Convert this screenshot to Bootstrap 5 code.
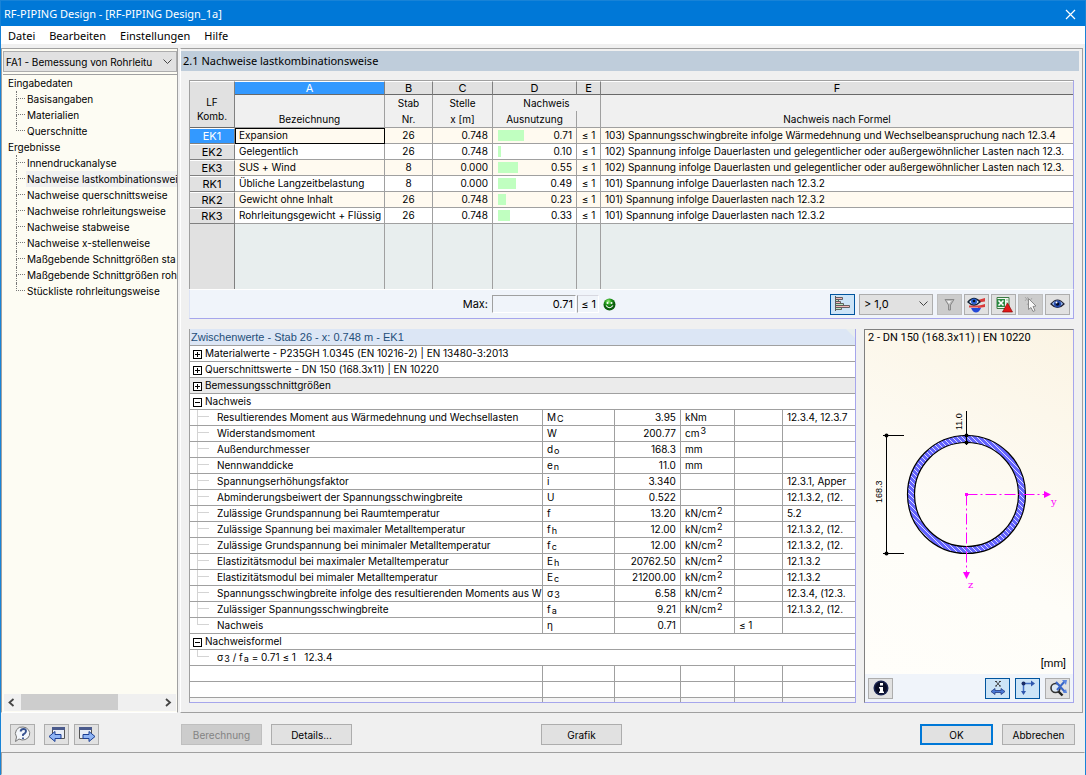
<!DOCTYPE html>
<html lang="de">
<head>
<meta charset="utf-8">
<meta name="viewport" content="width=device-width, initial-scale=1">
<title>RF-PIPING Design</title>
<link href="https://cdn.jsdelivr.net/npm/bootstrap@5.3.0/dist/css/bootstrap.min.css" rel="stylesheet">
<style>
:root{--ui:"Noto Sans",sans-serif;--grid:Inter,"Liberation Sans",sans-serif;--ln:#a0a0a0;--face:#f0f0f0;--edge:#a6a6ec}
body{font-family:var(--grid);font-size:10px;line-height:16px;font-feature-settings:"calt" 0;color:#000;background:var(--face);min-height:100vh;border:1px solid #1883d7}
button,select,input{font:inherit;color:inherit}
.titlebar{background:#0078d7;color:#fff;font-family:var(--ui);font-size:11px;height:25px;padding-left:3px}
.titlebar button{width:30px;height:24px;background:none;border:0;padding:0}
.menubar{background:#fff;font-family:var(--ui);font-size:11px;height:18px;padding-left:7px;gap:14px}
.menubar a{color:#000;text-decoration:none;line-height:19px}
.workarea{margin-top:4px}
.side{width:177px;border:1px solid var(--ln);border-bottom-color:#fff;background:#fdfcf3}
.combo{appearance:none;border:1px solid #adadad;border-radius:0;background:#e1e1e1 url("data:image/svg+xml,%3Csvg xmlns='http://www.w3.org/2000/svg' width='9' height='6'%3E%3Cpath d='M.5 .5l4 4 4-4' fill='none' stroke='%23444'/%3E%3C/svg%3E") no-repeat right 4px center}
.side .combo{height:21px;margin:2px 0 0 1px;padding:0 16px 0 2px;width:calc(100% - 1px)}
.tree{border-top:1px solid var(--ln);margin:2px 0 0 1px;white-space:nowrap;overflow:hidden;background:#fdfcf3}
.tree ul{list-style:none;margin:0;padding:0}
.tree>ul>li{padding-left:5px}
.tree li li{position:relative;margin-left:8px;padding-left:10px}
.tree li li::before{content:"";position:absolute;left:0;top:0;width:9px;height:8px;border-left:1px dotted #777;border-bottom:1px dotted #777}
.tree li li:not(:last-child)::after{content:"";position:absolute;left:0;top:8px;height:8px;border-left:1px dotted #777}
.tree a{display:block;color:#000;text-decoration:none;padding-left:1px}
.tree a.cur{background:#f0f0f0}
.hscroll{height:17px;background:#f0f0f0;margin:0 1px 1px 2px}
.hscroll svg{width:17px;height:17px}
.hscroll span{width:97px;height:16px;background:#cdcdcd}
.mainp{margin-left:2px;margin-right:2px;border:1px solid var(--ln);border-left:1px solid #fff;min-width:0;padding:2px 3px 9px 0}
.mainp h1{font:11px/20px var(--ui);background:#bfcddb;margin:0 0 9px;padding-left:2px;height:20px}
.content{margin:0 5px 0 8px}
table{border-collapse:separate;border-spacing:0;table-layout:fixed;width:100%}
.res{border:1px solid var(--ln);border-right-color:var(--edge);border-bottom:0}
.res td,.res th{padding:0;border:0 solid var(--ln);border-right-width:1px;border-bottom-width:1px;height:16px;line-height:15px;font-weight:400;white-space:nowrap;overflow:hidden;text-align:center}
.res tr>:last-child{border-right-width:0}
.res thead th{background:var(--face);border-bottom-width:0}
.res thead tr:last-child th{border-bottom-width:1px;height:17px;line-height:14px}
.res thead .ltr th{font-size:11px;background:#e1e1e1;border-top:1px solid #fff;border-bottom:1px solid #696969;border-right-color:#808080;height:14px;line-height:12px}
.res thead .ltr th.on{background:#3399ff;color:#fff}
.res thead .ltr th.corner{font-size:10px;background:#e1e1e1;border-bottom:1px solid #696969;line-height:14px;padding-top:8px}
.res tbody th{font-size:11px;background:#e1e1e1;border-top:1px solid #fff;border-right-color:#808080;border-bottom-color:#808080;line-height:12px}
.res tbody th.on{background:#3399ff;color:#fff}
.res tbody td{background:#fff}
.res tbody tr:nth-child(odd) td{background:#fffaf0}
.res .l{text-align:left;padding-left:4px}
.res .r{text-align:right;padding-right:4px}
.res td.pick{outline:1px solid #000;outline-offset:-1px}
.res .rest td,.res .rest:nth-child(odd) td{background:#e8eeee;height:65px;border-bottom:0}
.res .rest th{background:#e1e1e1;border-top:0;border-bottom:0}
.usage{width:40px;height:11px;margin-left:5px}
.usage i{display:block;height:11px;background:#c0ffc0}
.sumbar{background:#f0f4fa;border:1px solid var(--edge);border-top-color:#fff;border-left-color:#dde3f4;height:30px;font-size:11px;padding-right:3px}
.sumbar label{width:302px;text-align:right;padding-right:4px}
.sumbar input,.sumbar output{border:1px solid #fff;border-left-color:var(--ln);border-top-color:var(--ln);background:#f0f4fa;height:18px;border-radius:0;text-align:right;padding:0 2px 0 0}
.sumbar input{width:84px}
.sumbar output{width:22px;line-height:16px;margin-left:1px;border-top-color:#d8d8e0}
.tool{width:25px;height:21px;padding:0;background:#e1e1e1;border:1px solid #adadad;display:flex;align-items:center;justify-content:center}
.tool.on{background:#cce4f7;border:1px solid #00549e}
.tool:disabled{background:#ccc;border-color:#bfbfbf}
.lower{margin-top:10px;gap:8px}
.detail{border-left:1px solid var(--ln);border-right:1px solid var(--edge);border-bottom:1px solid var(--edge);background:#e8eeee;min-width:0}
.detail h2{font:11px/17px "Liberation Sans",sans-serif;color:#1f4e79;background:#dce6f5;margin:0;padding-left:1px;height:17px;border-bottom:1px solid var(--ln);clip-path:polygon(0 0,calc(100% - 9px) 0,100% 9px,100% 100%,0 100%)}
.calc td,.calc th{padding:0;font-weight:400;height:16px;line-height:15px;border-bottom:1px solid var(--ln);border-right:1px solid var(--ln);white-space:nowrap;overflow:hidden;background:#fff;text-align:left;padding-left:4px}
.calc tr>:last-child{border-right:0}
.calc .n{text-align:right;padding-right:4px}
.calc th.leaf{position:relative;padding-left:27px}
.calc th.leaf::before{content:"";position:absolute;left:7px;top:0;width:12px;height:7px;border-left:1px solid #d4d4d4;border-bottom:1px solid #d4d4d4}
.calc th.leaf:not(.end)::after{content:"";position:absolute;left:7px;top:7px;height:9px;border-left:1px solid #d4d4d4}
.calc .grp th{padding-left:3px}
.calc .grp.shade th{background:#ebebeb}
.calc button{width:9px;height:9px;border:1px solid #000;background:#fff;padding:0;margin-right:3px;display:inline-flex;vertical-align:-1px;border-radius:0}
.calc .tail td{height:4px;line-height:2px;border-bottom:0;background:#f4f4f4}
sub,sup{font-size:9px;line-height:0;padding-left:1px;bottom:auto;top:auto;position:static}
sub{vertical-align:-1px}sup{vertical-align:3px}
.section{width:210px;flex:none;border:1px solid var(--edge);border-top-color:#808080;border-left-color:#808080}
.canvas{background:linear-gradient(205deg,#fbf4e4,#fefdf8 65%,#fffefa);color:#000;font-family:Roboto,sans-serif;font-size:11px}
.canvas .cap{padding:0 0 0 3px}
.canvas .unit{text-align:right;padding-right:7px;height:18px}
.sectools{background:#f0f4fa;height:28px;padding:0 3px}
.cmd{border:1px solid #adadad;background:#e1e1e1;border-radius:0;height:21px;width:81px;padding:0;line-height:18px}
.cmd:disabled{background:#ccc;color:#838383;border-color:#bfbfbf}
.cmd.ok{border:2px solid #0078d7;width:73px}
.cmds{height:39px;padding:11px 10px 7px 9px}
.status{height:23px;border:1px solid var(--face);border-top-color:var(--ln);border-left-color:var(--ln)}
</style>
</head>
<body class="d-flex flex-column">
<header class="titlebar d-flex align-items-center justify-content-between">
  <span>RF-PIPING Design - [RF-PIPING Design_1a]</span>
  <button type="button" aria-label="Schließen"><svg width="11" height="11"><path d="M1 1l9 9M10 1l-9 9" stroke="#fff" stroke-width="1.2"/></svg></button>
</header>
<nav class="menubar d-flex"><a href="#">Datei</a><a href="#">Bearbeiten</a><a href="#">Einstellungen</a><a href="#">Hilfe</a></nav>

<div class="workarea d-flex flex-grow-1">
  <aside class="side d-flex flex-column flex-shrink-0">
    <select class="combo" aria-label="Bemessungsfall"><option>FA1 - Bemessung von Rohrleitu</option></select>
    <nav class="tree flex-grow-1">
      <ul>
        <li>Eingabedaten
          <ul><li><a href="#">Basisangaben</a></li><li><a href="#">Materialien</a></li><li><a href="#">Querschnitte</a></li></ul></li>
        <li>Ergebnisse
          <ul><li><a href="#">Innendruckanalyse</a></li><li><a href="#" class="cur">Nachweise lastkombinationswei</a></li><li><a href="#">Nachweise querschnittsweise</a></li><li><a href="#">Nachweise rohrleitungsweise</a></li><li><a href="#">Nachweise stabweise</a></li><li><a href="#">Nachweise x-stellenweise</a></li><li><a href="#">Maßgebende Schnittgrößen sta</a></li><li><a href="#">Maßgebende Schnittgrößen roh</a></li><li><a href="#">Stückliste rohrleitungsweise</a></li></ul></li>
      </ul>
    </nav>
    <div class="hscroll d-flex">
      <svg><path d="M9.500 5l-4 3.500 4 3.500" fill="none" stroke="#444" stroke-width="1.800"/></svg><span></span><svg class="ms-auto"><path d="M7 5l4 3.500-4 3.500" fill="none" stroke="#444" stroke-width="1.800"/></svg>
    </div>
  </aside>

  <main class="mainp flex-grow-1 d-flex flex-column">
    <h1>2.1 Nachweise lastkombinationsweise</h1>
    <div class="content flex-grow-1 d-flex flex-column">
      <table class="res">
        <colgroup><col style="width:45px"><col style="width:150px"><col style="width:48px"><col style="width:60px"><col style="width:84px"><col style="width:24px"><col></colgroup>
        <thead>
          <tr class="ltr"><th rowspan="3" class="corner">LF<br>Komb.</th><th class="on">A</th><th>B</th><th>C</th><th>D</th><th>E</th><th>F</th></tr>
          <tr><th></th><th>Stab</th><th>Stelle</th><th colspan="2">Nachweis</th><th></th></tr>
          <tr><th>Bezeichnung</th><th>Nr.</th><th>x [m]</th><th>Ausnutzung</th><th></th><th>Nachweis nach Formel</th></tr>
        </thead>
        <tbody>
          <tr><th class="on">EK1</th><td class="l pick">Expansion</td><td>26</td><td class="r">0.748</td><td class="r"><div class="d-flex justify-content-between align-items-center"><div class="usage"><i style="width:65%"></i></div>0.71</div></td><td>≤ 1</td><td class="l">103) Spannungsschwingbreite infolge Wärmedehnung und Wechselbeanspruchung nach 12.3.4</td></tr>
          <tr><th>EK2</th><td class="l">Gelegentlich</td><td>26</td><td class="r">0.748</td><td class="r"><div class="d-flex justify-content-between align-items-center"><div class="usage"><i style="width:8%"></i></div>0.10</div></td><td>≤ 1</td><td class="l">102) Spannung infolge Dauerlasten und gelegentlicher oder außergewöhnlicher Lasten nach 12.3.</td></tr>
          <tr><th>EK3</th><td class="l">SUS + Wind</td><td>8</td><td class="r">0.000</td><td class="r"><div class="d-flex justify-content-between align-items-center"><div class="usage"><i style="width:50%"></i></div>0.55</div></td><td>≤ 1</td><td class="l">102) Spannung infolge Dauerlasten und gelegentlicher oder außergewöhnlicher Lasten nach 12.3.</td></tr>
          <tr><th>RK1</th><td class="l">Übliche Langzeitbelastung</td><td>8</td><td class="r">0.000</td><td class="r"><div class="d-flex justify-content-between align-items-center"><div class="usage"><i style="width:45%"></i></div>0.49</div></td><td>≤ 1</td><td class="l">101) Spannung infolge Dauerlasten nach 12.3.2</td></tr>
          <tr><th>RK2</th><td class="l">Gewicht ohne Inhalt</td><td>26</td><td class="r">0.748</td><td class="r"><div class="d-flex justify-content-between align-items-center"><div class="usage"><i style="width:20%"></i></div>0.23</div></td><td>≤ 1</td><td class="l">101) Spannung infolge Dauerlasten nach 12.3.2</td></tr>
          <tr><th>RK3</th><td class="l">Rohrleitungsgewicht + Flüssig</td><td>26</td><td class="r">0.748</td><td class="r"><div class="d-flex justify-content-between align-items-center"><div class="usage"><i style="width:30%"></i></div>0.33</div></td><td>≤ 1</td><td class="l">101) Spannung infolge Dauerlasten nach 12.3.2</td></tr>
          <tr class="rest"><th></th><td></td><td></td><td></td><td></td><td></td><td></td></tr>
        </tbody>
      </table>
      <div class="sumbar d-flex align-items-center">
        <label for="mx">Max:</label><input id="mx" value="0.71"><output for="mx">≤ 1</output>
        <svg class="ms-1" width="13" height="13"><defs><radialGradient id="sm" cx=".4" cy=".25"><stop offset="0" stop-color="#9df27e"/><stop offset=".5" stop-color="#27a01f"/><stop offset="1" stop-color="#0a5c0c"/></radialGradient></defs><circle cx="6.500" cy="6.500" r="6" fill="url(#sm)"/><circle cx="4.500" cy="5" r="1" fill="#fff"/><circle cx="8.500" cy="5" r="1" fill="#fff"/><path d="M3 7.500q3.500 4.500 7 0" fill="none" stroke="#fff" stroke-width="1.200"/></svg>
        <div class="d-flex ms-auto">
          <button type="button" class="tool on" aria-label="Balken"><svg width="17" height="16"><path d="M1.500 0v15" stroke="#555"/><g fill="#f3b6b6" stroke="#555" stroke-width=".9"><path d="M1.500 1.500h7v2h-7z"/><path d="M1.500 3.500h3v2h-3z" fill="#b8e8c0"/><path d="M1.500 5.500h5v2h-5z"/><path d="M1.500 7.500h8v2h-8z" fill="#b8e8c0"/><path d="M1.500 9.500h14v2h-14z"/><path d="M1.500 11.500h6v2h-6z" fill="#b8e8c0"/></g></svg></button>
          <select class="combo ms-1 me-1" aria-label="Grenzwert" style="width:74px;padding:0 4px"><option>&gt; 1,0</option></select>
          <div class="d-flex" style="gap:2px">
          <button type="button" class="tool" disabled aria-label="Filter"><svg width="11" height="13"><path d="M1 1.500h9L6.500 7v5h-2V7z" fill="#bbb" stroke="#8a8a8a"/><path d="M3 3h4l-2 3z" fill="#eee"/></svg></button>
          <button type="button" class="tool" aria-label="Farben"><svg width="19" height="17"><path d="M11 4l7-2v3.500l-7 1zM11 10l7-2v3l-7 1z" fill="#d93a3a"/><path d="M2 9.500h12v2H2z" fill="#e04848"/><path d="M4 12h10q-2 4.500-5 4.500t-5-4.500z" fill="#2348d8"/><path d="M1 6q6-7 12 0-6 6-12 0z" fill="#dfe9fb" stroke="#123" stroke-width="1.300"/><circle cx="7" cy="5.500" r="3" fill="#2a5fd0"/><circle cx="7" cy="5" r="1.300" fill="#012"/></svg></button>
          <button type="button" class="tool" aria-label="Excel"><svg width="18" height="17"><path d="M2 1.500h12v11h-12z" fill="#f2f8f0" stroke="#3e7a45"/><path d="M11 4h3M11 7h3" stroke="#8cb892"/><path d="M2 3h8v8H2z" fill="#2b8a43"/><path d="M3.500 4.500l5 5M8.500 4.500l-5 5" stroke="#fff" stroke-width="1.600"/><path d="M12.500 7l5 9h-10z" fill="#e01818" stroke="#8e0a0a" stroke-width=".7"/></svg></button>
          <button type="button" class="tool" disabled aria-label="Auswahl"><svg width="16" height="17"><path d="M2 1l5 6M2 5l3-4M4 9l5-7" stroke="#aaa"/><path d="M5.500 2.500l7.500 7.500-3 .5 2 4-2 1-2-4-2.500 2z" fill="#f8f8f8" stroke="#8a8a8a"/></svg></button>
          <button type="button" class="tool" aria-label="Ansicht"><svg width="15" height="12"><path d="M1 6q6.500-8 13 0-6.500 7-13 0z" fill="#8fb0e8" stroke="#223" stroke-width="1.200"/><circle cx="7.500" cy="6" r="3.500" fill="#2448a8"/><circle cx="7.500" cy="6" r="1.800" fill="#020a28"/><circle cx="6.500" cy="4.500" r="1" fill="#fff"/></svg></button>
          </div>
        </div>
      </div>

      <div class="lower d-flex flex-grow-1">
        <section class="detail flex-grow-1">
          <h2>Zwischenwerte - Stab 26 - x: 0.748 m - EK1</h2>
          <table class="calc">
            <colgroup><col><col style="width:72px"><col style="width:66px"><col style="width:54px"><col style="width:48px"><col style="width:72px"></colgroup>
            <tbody>
            <tr class="grp"><th colspan="6"><button type="button" aria-label="Aufklappen"><svg width="7" height="7"><path d="M1 3.500h5M3.500 1v5" stroke="#000"/></svg></button>Materialwerte - P235GH 1.0345 (EN 10216-2) | EN 13480-3:2013</th></tr>
            <tr class="grp"><th colspan="6"><button type="button" aria-label="Aufklappen"><svg width="7" height="7"><path d="M1 3.500h5M3.500 1v5" stroke="#000"/></svg></button>Querschnittswerte - DN 150 (168.3x11) | EN 10220</th></tr>
            <tr class="grp shade"><th colspan="6"><button type="button" aria-label="Aufklappen"><svg width="7" height="7"><path d="M1 3.500h5M3.500 1v5" stroke="#000"/></svg></button>Bemessungsschnittgrößen</th></tr>
            <tr class="grp"><th colspan="6"><button type="button" aria-label="Zuklappen"><svg width="7" height="7"><path d="M1 3.500h5" stroke="#000"/></svg></button>Nachweis</th></tr>
            <tr><th class="leaf">Resultierendes Moment aus Wärmedehnung und Wechsellasten</th><td>M<sub>C</sub></td><td class="n">3.95</td><td>kNm</td><td></td><td>12.3.4, 12.3.7</td></tr>
            <tr><th class="leaf">Widerstandsmoment</th><td>W</td><td class="n">200.77</td><td>cm<sup>3</sup></td><td></td><td></td></tr>
            <tr><th class="leaf">Außendurchmesser</th><td>d<sub>o</sub></td><td class="n">168.3</td><td>mm</td><td></td><td></td></tr>
            <tr><th class="leaf">Nennwanddicke</th><td>e<sub>n</sub></td><td class="n">11.0</td><td>mm</td><td></td><td></td></tr>
            <tr><th class="leaf">Spannungserhöhungsfaktor</th><td>i</td><td class="n">3.340</td><td></td><td></td><td>12.3.1, Apper</td></tr>
            <tr><th class="leaf">Abminderungsbeiwert der Spannungsschwingbreite</th><td>U</td><td class="n">0.522</td><td></td><td></td><td>12.1.3.2, (12.</td></tr>
            <tr><th class="leaf">Zulässige Grundspannung bei Raumtemperatur</th><td>f</td><td class="n">13.20</td><td>kN/cm<sup>2</sup></td><td></td><td>5.2</td></tr>
            <tr><th class="leaf">Zulässige Spannung bei maximaler Metalltemperatur</th><td>f<sub>h</sub></td><td class="n">12.00</td><td>kN/cm<sup>2</sup></td><td></td><td>12.1.3.2, (12.</td></tr>
            <tr><th class="leaf">Zulässige Grundspannung bei minimaler Metalltemperatur</th><td>f<sub>c</sub></td><td class="n">12.00</td><td>kN/cm<sup>2</sup></td><td></td><td>12.1.3.2, (12.</td></tr>
            <tr><th class="leaf">Elastizitätsmodul bei maximaler Metalltemperatur</th><td>E<sub>h</sub></td><td class="n">20762.50</td><td>kN/cm<sup>2</sup></td><td></td><td>12.1.3.2</td></tr>
            <tr><th class="leaf">Elastizitätsmodul bei mimaler Metalltemperatur</th><td>E<sub>c</sub></td><td class="n">21200.00</td><td>kN/cm<sup>2</sup></td><td></td><td>12.1.3.2</td></tr>
            <tr><th class="leaf">Spannungsschwingbreite infolge des resultierenden Moments aus W</th><td>σ<sub>3</sub></td><td class="n">6.58</td><td>kN/cm<sup>2</sup></td><td></td><td>12.3.4, (12.3.</td></tr>
            <tr><th class="leaf">Zulässiger Spannungsschwingbreite</th><td>f<sub>a</sub></td><td class="n">9.21</td><td>kN/cm<sup>2</sup></td><td></td><td>12.1.3.2, (12.</td></tr>
            <tr><th class="leaf end">Nachweis</th><td>η</td><td class="n">0.71</td><td></td><td>≤ 1</td><td></td></tr>
            <tr class="grp"><th colspan="6"><button type="button" aria-label="Zuklappen"><svg width="7" height="7"><path d="M1 3.500h5" stroke="#000"/></svg></button>Nachweisformel</th></tr>
            <tr><th colspan="6" class="leaf end">σ<sub>3</sub> / f<sub>a</sub> = 0.71 ≤ 1 &nbsp; 12.3.4</th></tr>
            <tr><th></th><td></td><td></td><td></td><td></td><td></td></tr>
            <tr><th></th><td></td><td></td><td></td><td></td><td></td></tr>
            <tr class="tail"><td></td><td></td><td></td><td></td><td></td><td></td></tr>
            </tbody>
          </table>
        </section>

        <section class="section d-flex flex-column">
          <div class="canvas flex-grow-1 d-flex flex-column">
            <div class="cap">2 - DN 150 (168.3x11) | EN 10220</div>
            <svg class="flex-grow-1" width="100%" height="310" viewBox="865 346 208 310">
              <defs><pattern id="hatch" width="5" height="5" patternUnits="userSpaceOnUse"><path d="M-1 -1l7 7M-1 4l2 2M4 -1l2 2" stroke="#dcdcff" stroke-width="1"/></pattern></defs>
              <circle cx="966.500" cy="494.500" r="55.500" fill="none" stroke="#6464ff" stroke-width="7"/>
              <circle cx="966.500" cy="494.500" r="55.500" fill="none" stroke="url(#hatch)" stroke-width="7"/>
              <circle cx="966.500" cy="494.500" r="59" fill="none" stroke="#000" stroke-width="1.200"/>
              <circle cx="966.500" cy="494.500" r="52" fill="none" stroke="#000" stroke-width="1.200"/>
              <path d="M886.500 435v119M883 435.500h21M883 553.500h21M966.500 411v34M963 435.500h7M963 442.500h7" fill="none" stroke="#000"/>
              <g><circle cx="886.500" cy="435.500" r="2"/><circle cx="886.500" cy="553.500" r="2"/><circle cx="966.500" cy="435.500" r="2"/><circle cx="966.500" cy="442.500" r="2"/></g>
              <path d="M966.500 494.500h78M966.500 494.500v78" fill="none" stroke="#f0f" stroke-dasharray="11 3 2 3"/>
              <path d="M1044 491l7 3.500-7 3.500zM963 572l3.500 7 3.500-7zM965 493h3v3h-3z" fill="#f0f"/>
              <g font-family="Liberation Sans,sans-serif" font-size="9"><text transform="translate(962 430) rotate(-90)">11.0</text><text transform="translate(882 503) rotate(-90)">168.3</text></g>
              <g font-family="DejaVu Serif,serif" font-size="10" fill="#f0f"><text x="1051" y="505">y</text><text x="968" y="588">z</text></g>
            </svg>
            <div class="unit">[mm]</div>
          </div>
          <div class="sectools d-flex align-items-center">
            <button type="button" class="tool" aria-label="Info"><svg width="16" height="16"><circle cx="8" cy="8" r="7.500" fill="#1a2450"/><circle cx="8" cy="8" r="6" fill="#080c24"/><path d="M7 3h3v2.500H7zM6 7h4v4.500h1V13H6v-1.500h1v-3H6z" fill="#fff"/></svg></button>
            <button type="button" class="tool on ms-auto" aria-label="Bemaßung"><svg width="16" height="16"><path d="M6 1.500l4 4.500M10 1.500l-4 4.500M5 1.500h2M9 1.500h2M5 6h2M9 6h2" stroke="#333" stroke-width=".9"/><path d="M1 11.500l4-3v2h6v-2l4 3-4 3v-2H5v2z" fill="#4a7ad8" stroke="#223a80" stroke-width=".8"/></svg></button>
            <button type="button" class="tool on" style="margin-left:5px" aria-label="Achsen"><svg width="18" height="16"><path d="M4.500 12V3.500H13" fill="none" stroke="#456fc4" stroke-width="1.500"/><path d="M12 .5l4 3-4 3zM2 11l2.500 4L7 11z" fill="#2f57ae"/><circle cx="4.500" cy="3.500" r="2" fill="#1b2d66"/></svg></button>
            <button type="button" class="tool" style="margin-left:5px" aria-label="Zoom alles"><svg width="18" height="17"><circle cx="6.500" cy="8" r="4.500" fill="#dce8f4" stroke="#333" stroke-width="1.600"/><path d="M9.500 11.500l4 4" stroke="#222" stroke-width="2.400"/><path d="M7 2l9 10M16 1l-8 9" stroke="#3a66c8" stroke-width="2"/><path d="M13 0h5l-1 5zM14 13h4l-1-4z" fill="#5b86e0"/></svg></button>
          </div>
        </section>
      </div>
    </div>
  </main>
</div>

<footer>
  <div class="cmds d-flex">
    <button type="button" class="tool" aria-label="Hilfe"><svg width="17" height="17"><path d="M9 1a7 6.500 0 1 1-4 12l-3.500 2.500 1-4.500A6.500 6.500 0 0 1 9 1z" fill="#f3f6fb" stroke="#777"/><path d="M6.500 5.500q.5-2.500 3-2.500t2.500 2-3 3.500v1.500M9 11.500v1.500" fill="none" stroke="#35508e" stroke-width="1.800"/></svg></button>
    <button type="button" class="tool" style="margin-left:9px" aria-label="Zurück"><svg width="18" height="17"><path d="M4.500 1.500h12v11h-12z" fill="#e8edf6" stroke="#555"/><path d="M4 1h13v3H4z" fill="#4a5a8c"/><path d="M1 10.500l6-5v3h6v4H7v3z" fill="#8fb4f4" stroke="#1c3f94"/></svg></button>
    <button type="button" class="tool" style="margin-left:5px" aria-label="Weiter"><svg width="18" height="17"><path d="M1.500 1.500h12v11h-12z" fill="#e8edf6" stroke="#555"/><path d="M1 1h13v3H1z" fill="#4a5a8c"/><path d="M17 10.500l-6-5v3H5v4h6v3z" fill="#8fb4f4" stroke="#1c3f94"/></svg></button>
    <button type="button" class="cmd" disabled style="margin-left:82px">Berechnung</button>
    <button type="button" class="cmd" style="margin-left:9px">Details...</button>
    <button type="button" class="cmd" style="margin-left:189px">Grafik</button>
    <button type="button" class="cmd ok ms-auto">OK</button>
    <button type="button" class="cmd" style="margin-left:9px;width:73px">Abbrechen</button>
  </div>
  <div class="status"></div>
</footer>
<script src="https://cdn.jsdelivr.net/npm/bootstrap@5.3.0/dist/js/bootstrap.bundle.min.js"></script>
</body>
</html>
